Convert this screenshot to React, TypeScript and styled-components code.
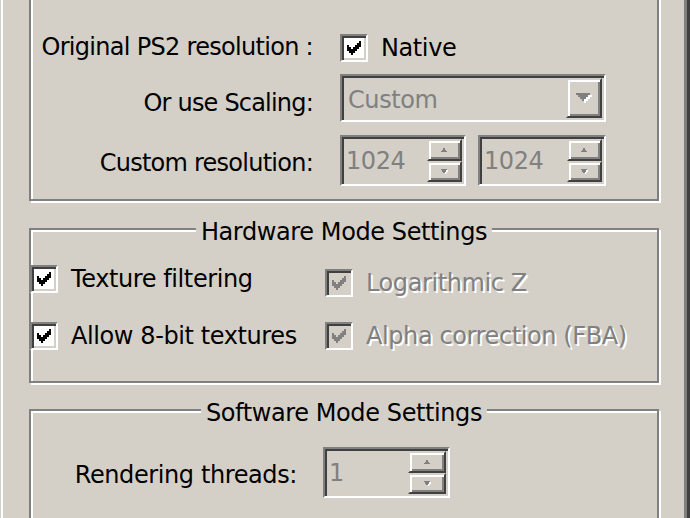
import React from "react";
import styled, { createGlobalStyle, css } from "styled-components";

const GlobalStyle = createGlobalStyle`
  html, body { margin: 0; padding: 0; background: #d4d0c8; }
  body {
    width: 690px;
    height: 518px;
    overflow: hidden;
    font-family: "DejaVu Sans", Tahoma, sans-serif;
    font-size: 24px;
    letter-spacing: -0.4px;
    color: #000;
  }
`;

const sunken = css`
  box-sizing: border-box;
  border: 2px solid;
  border-color: #808080 #fff #fff #808080;
  box-shadow: inset 2px 2px 0 #404040, inset -2px -2px 0 #d4d0c8;
`;

const raised = css`
  box-sizing: border-box;
  border: 2px solid;
  border-color: #d4d0c8 #404040 #404040 #d4d0c8;
  box-shadow: inset 2px 2px 0 #fff, inset -2px -2px 0 #808080;
  background: #d4d0c8;
`;

const Panel = styled.div`
  box-sizing: border-box;
  height: 518px;
  margin-left: 1px;
  border-left: 2px solid #fff;
  border-right: 3px solid #404040;
  box-shadow: inset -3px 0 0 #808080;
  padding: 0 28px 0 26px;
  display: flex;
  flex-direction: column;
  overflow: hidden;
`;

const Group = styled.div<{ $mt: number; $pt: number; $pb: number }>`
  position: relative;
  flex: none;
  margin-top: ${(p) => p.$mt}px;
  padding: ${(p) => p.$pt}px 0 ${(p) => p.$pb}px;
  border: 2px solid #808080;
  box-shadow: inset 2px 2px 0 #fff, 2px 2px 0 #fff;
`;

const GroupTitle = styled.div`
  position: absolute;
  top: -12px;
  left: 50%;
  transform: translateX(-50%);
  padding: 0 5px;
  line-height: 28px;
  white-space: nowrap;
  background: #d4d0c8;
`;

const FormGrid = styled.div<{ $labelWidth: number; $gap: number }>`
  display: grid;
  grid-template-columns: ${(p) => p.$labelWidth}px auto;
  column-gap: ${(p) => p.$gap}px;
  row-gap: 13px;
  align-items: center;
  justify-items: start;
`;

const Label = styled.div<{ $dy?: number; $ls?: number }>`
  justify-self: end;
  white-space: nowrap;
  line-height: 28px;
  position: relative;
  top: ${(p) => p.$dy ?? 0}px;
  letter-spacing: ${(p) => p.$ls ?? -0.4}px;
`;

const CheckGrid = styled.div`
  display: grid;
  grid-template-columns: 295px auto;
  row-gap: 29px;
  margin-left: -1px;
`;

const CheckRow = styled.label<{ $dy?: number }>`
  display: flex;
  align-items: center;
  gap: 13px;
  height: 28px;
  position: relative;
  top: ${(p) => p.$dy ?? 0}px;
`;

const CheckBox = styled.span<{ $disabled?: boolean }>`
  ${sunken};
  flex: none;
  width: 28px;
  height: 28px;
  display: inline-flex;
  align-items: center;
  justify-content: center;
  background: ${(p) => (p.$disabled ? "#d4d0c8" : "#fff")};
  color: ${(p) => (p.$disabled ? "#808080" : "#000")};
`;

const CheckText = styled.span<{ $disabled?: boolean }>`
  white-space: nowrap;
  line-height: 28px;
  color: ${(p) => (p.$disabled ? "#808080" : "#000")};
  text-shadow: ${(p) => (p.$disabled ? "2px 2px 0 #fff" : "none")};
`;

const Field = styled.div<{ $w: number; $h: number }>`
  ${sunken};
  width: ${(p) => p.$w}px;
  height: ${(p) => p.$h}px;
  padding: 2px;
  display: flex;
  align-items: stretch;
  background: #d4d0c8;
`;

const FieldText = styled.div<{ $pl: number; $dy?: number }>`
  flex: 1;
  display: flex;
  align-items: center;
  padding-left: ${(p) => p.$pl}px;
  padding-top: ${(p) => (p.$dy ?? 0) * 2}px;
  color: #808080;
  white-space: nowrap;
  overflow: hidden;
`;

const DropButton = styled.div`
  ${raised};
  width: 36px;
  display: flex;
  align-items: center;
  justify-content: center;
`;

const SpinButtons = styled.div<{ $w: number }>`
  width: ${(p) => p.$w}px;
  display: flex;
  flex-direction: column;
`;

const SpinButton = styled.div`
  ${raised};
  flex: 1;
  display: flex;
  align-items: center;
  justify-content: center;
`;

const FieldPair = styled.div`
  display: flex;
  gap: 12px;
`;

const CHECK =
  "0,2 1,2 1,3 2,3 2,4 3,4 3,3 4,3 4,2 5,2 5,1 6,1 6,0 7,0 7,3 6,3 6,4 5,4 5,5 4,5 4,6 3,6 3,7 2,7 2,6 1,6 1,5 0,5";

const CheckMark = () => (
  <svg width="14" height="14" viewBox="0 0 7 7" shapeRendering="crispEdges">
    <polygon points={CHECK} fill="currentColor" />
  </svg>
);

const COMBO_ARROW = "0,0 7,0 7,1 6,1 6,2 5,2 5,3 4,3 4,4 3,4 3,3 2,3 2,2 1,2 1,1 0,1";
const SPIN_DOWN = "0,0 5,0 5,1 4,1 4,2 3,2 3,3 2,3 2,2 1,2 1,1 0,1";

const Arrow = ({ points, w, h, vw, vh, up }: { points: string; w: number; h: number; vw: number; vh: number; up?: boolean }) => (
  <svg width={w} height={h} viewBox={`0 0 ${vw} ${vh}`} shapeRendering="crispEdges" style={up ? { transform: "scaleY(-1)" } : undefined}>
    <polygon points={points} fill="#fff" transform={up ? "translate(1,-1)" : "translate(1,1)"} />
    <polygon points={points} fill="#808080" />
  </svg>
);

const Check = ({ label, disabled, dy }: { label: string; disabled?: boolean; dy?: number }) => (
  <CheckRow $dy={dy}>
    <CheckBox $disabled={disabled}>
      <CheckMark />
    </CheckBox>
    <CheckText $disabled={disabled}>{label}</CheckText>
  </CheckRow>
);

const Spinner = ({ value, w, h, bw, pl }: { value: string; w: number; h: number; bw: number; pl: number }) => (
  <Field $w={w} $h={h}>
    <FieldText $pl={pl}>{value}</FieldText>
    <SpinButtons $w={bw}>
      <SpinButton>
        <Arrow points={SPIN_DOWN} w={9} h={5} vw={6} vh={4} up />
      </SpinButton>
      <SpinButton>
        <Arrow points={SPIN_DOWN} w={9} h={5} vw={6} vh={4} />
      </SpinButton>
    </SpinButtons>
  </Field>
);

export default function App() {
  return (
    <>
      <GlobalStyle />
      <Panel>
        <Group $mt={-40} $pt={71} $pb={13}>
          <FormGrid $labelWidth={282} $gap={27}>
            <Label $ls={-0.7}>Original PS2 resolution :</Label>
            <Check label="Native" dy={1} />
            <Label $dy={5} $ls={-0.8}>Or use Scaling:</Label>
            <Field $w={266} $h={48}>
              <FieldText $pl={4} $dy={2}>Custom</FieldText>
              <DropButton>
                <Arrow points={COMBO_ARROW} w={16} h={10} vw={8} vh={5} />
              </DropButton>
            </Field>
            <Label $dy={2} $ls={-0.75}>Custom resolution:</Label>
            <FieldPair>
              <Spinner value="1024" w={126} h={51} bw={35} pl={2} />
              <Spinner value="1024" w={128} h={51} bw={35} pl={2} />
            </FieldPair>
          </FormGrid>
        </Group>

        <Group $mt={27} $pt={35} $pb={31}>
          <GroupTitle>Hardware Mode Settings</GroupTitle>
          <CheckGrid>
            <Check label="Texture filtering" />
            <Check label="Logarithmic Z" disabled dy={4} />
            <Check label="Allow 8-bit textures" />
            <Check label="Alpha correction (FBA)" disabled dy={0} />
          </CheckGrid>
        </Group>

        <Group $mt={26} $pt={36} $pb={30}>
          <GroupTitle>Software Mode Settings</GroupTitle>
          <FormGrid $labelWidth={266} $gap={26}>
            <Label $dy={2}>Rendering threads:</Label>
            <Spinner value="1" w={127} h={51} bw={38} pl={2} />
          </FormGrid>
        </Group>
      </Panel>
    </>
  );
}
